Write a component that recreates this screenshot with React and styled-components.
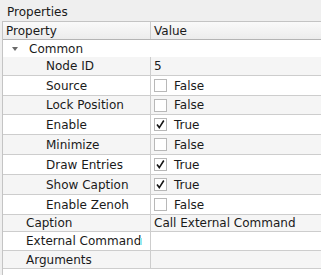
import styled, { createGlobalStyle } from "styled-components";

const Global = createGlobalStyle`
	html, body {
		margin: 0;
		padding: 0;
		background: #efefef;
	}
	body {
		font-family: "DejaVu Sans", Verdana, sans-serif;
		font-size: 12px;
		color: #1a1a1a;
	}
`

const Panel = styled.div`
	width: 321px;
	height: 275px;
	display: flex;
	flex-direction: column;
	overflow: hidden;
	background: #efefef;
`

const Title = styled.div`
	height: 21px;
	line-height: 24px;
	padding-left: 7px;
`

const Table = styled.div`
	flex: 1;
	margin-left: 2px;
	background: #fff;
	border-left: 1px solid #c4c4c4;
	border-top: 1px solid #c4c4c4;
	display: flex;
	flex-direction: column;
`

const Row = styled.div`
	display: grid;
	grid-template-columns: 148px 1fr;
	height: ${(p) => p.h}px;
	box-sizing: border-box;
	background: ${(p) => (p.alt ? "#f5f5f5" : "#fff")};
	border-bottom: ${(p) => (p.line ? "1px solid #cdcdcd" : "none")};
`

const HeaderRow = styled(Row)`
	background: linear-gradient(#fafafa, #ececec);
	border-bottom: 1px solid #b4b4b4;
`

const Cell = styled.div`
	position: relative;
	display: flex;
	align-items: center;
	padding-left: ${(p) => p.indent || 3}px;
	white-space: nowrap;
	overflow: hidden;
	border-right: ${(p) => (p.divider ? "1px solid #cdcdcd" : "none")};
`

const Arrow = styled.span`
	width: 0;
	height: 0;
	border-left: 3.5px solid transparent;
	border-right: 3.5px solid transparent;
	border-top: 4px solid #6a6a6a;
	margin-left: 6px;
	margin-right: 11px;
	margin-top: 1px;
`

const Cursor = styled.span`
	position: absolute;
	left: 137px;
	top: 6px;
	width: 2px;
	height: 7px;
	background: #8fe8f2;
`

const Box = styled.span`
	width: 13px;
	height: 13px;
	box-sizing: border-box;
	border: 1px solid #b8b8b8;
	background: #fff;
	margin-right: 7px;
	display: flex;
	align-items: center;
	justify-content: center;
`

const Check = ({ on }) => (
	<Box>
		{on && (
			<svg width="11" height="11" viewBox="0 0 11 11">
				<path d="M2 5.5 L4.3 8.6 L8.8 1.5" fill="none" stroke="#151515" strokeWidth="1.6" />
			</svg>
		)}
	</Box>
)

const rows = [
	{ name: "Node ID", value: "5", h: 19 },
	{ name: "Source", check: false, h: 20 },
	{ name: "Lock Position", check: false, h: 19 },
	{ name: "Enable", check: true, h: 20 },
	{ name: "Minimize", check: false, h: 20 },
	{ name: "Draw Entries", check: true, h: 20 },
	{ name: "Show Caption", check: true, h: 20 },
	{ name: "Enable Zenoh", check: false, h: 20 },
];

const topRows = [
	{ name: "Caption", value: "Call External Command", h: 17 },
	{ name: "External Command", value: "", h: 19, cursor: true },
	{ name: "Arguments", value: "", h: 18 },
];

const App = () => {
	return (
		<Panel>
			<Global />
			<Title>Properties</Title>
			<Table>
				<HeaderRow h={18} line>
					<Cell divider indent={3}>Property</Cell>
					<Cell indent={3}>Value</Cell>
				</HeaderRow>
				<Row h={17}>
					<Cell indent={0}><Arrow />Common</Cell>
					<Cell />
				</Row>
				{rows.map((r, i) => (
					<Row key={r.name} h={r.h} alt={i % 2 === 0} line>
						<Cell divider indent={43}>{r.name}</Cell>
						<Cell indent={3}>
							{r.check !== undefined && <Check on={r.check} />}
							{r.check !== undefined ? (r.check ? "True" : "False") : r.value}
						</Cell>
					</Row>
				))}
				{topRows.map((r, i) => (
					<Row key={r.name} h={r.h} alt={i % 2 === 0} line>
						<Cell divider indent={23}>
							{r.name}
							{r.cursor && <Cursor />}
						</Cell>
						<Cell indent={3}>{r.value}</Cell>
					</Row>
				))}
			</Table>
		</Panel>
	)
}

export default App;
